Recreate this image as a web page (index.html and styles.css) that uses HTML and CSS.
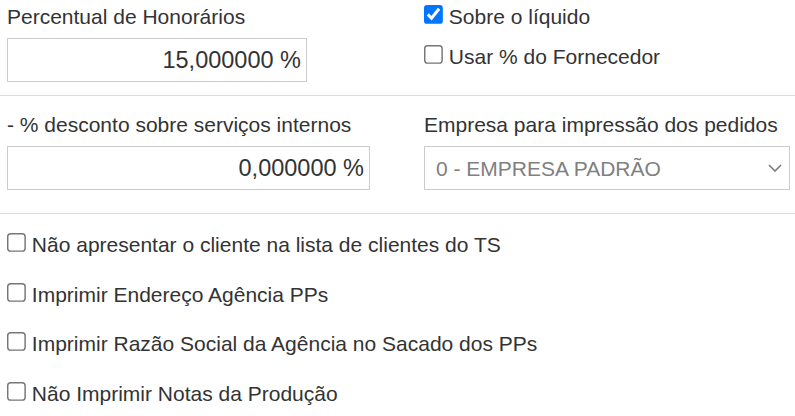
FILE: index.html
```html
<!DOCTYPE html>
<html lang="pt-BR">
<head>
  <meta charset="UTF-8">
  <meta name="viewport" content="width=device-width, initial-scale=1.0">
  <title>Honorários</title>
  <link rel="stylesheet" href="styles.css">
</head>
<body>
  <div class="form">
    <!-- Honorarios -->
    <div class="row row--first">
      <div class="field">
        <label class="field__label" for="honorarios">Percentual de Honorários</label>
        <input class="field__input field__input--short" id="honorarios" type="text" value="15,000000 %">
      </div>
      <div class="checks">
        <label class="check"><input type="checkbox" checked><span>Sobre o líquido</span></label>
        <label class="check"><input type="checkbox"><span>Usar % do Fornecedor</span></label>
      </div>
    </div>

    <hr class="divider divider--first">

    <!-- Desconto / empresa -->
    <div class="row row--second">
      <div class="field">
        <label class="field__label" for="desconto">- % desconto sobre serviços internos</label>
        <input class="field__input field__input--long" id="desconto" type="text" value="0,000000 %">
      </div>
      <div class="field">
        <label class="field__label" for="empresa">Empresa para impressão dos pedidos</label>
        <div class="select">
          <select class="select__control" id="empresa">
            <option>0 - EMPRESA PADRÃO</option>
          </select>
          <svg class="select__arrow" width="14" height="8" viewBox="0 0 14 8">
            <path d="M1 1l6 6 6-6" fill="none" stroke="#7a7a7a" stroke-width="1.6"/>
          </svg>
        </div>
      </div>
    </div>

    <hr class="divider divider--second">

    <!-- Opcoes -->
    <div class="options">
      <label class="check"><input type="checkbox"><span>Não apresentar o cliente na lista de clientes do TS</span></label>
      <label class="check"><input type="checkbox"><span>Imprimir Endereço Agência PPs</span></label>
      <label class="check"><input type="checkbox"><span>Imprimir Razão Social da Agência no Sacado dos PPs</span></label>
      <label class="check"><input type="checkbox"><span>Não Imprimir Notas da Produção</span></label>
    </div>
  </div>
</body>
</html>
```

FILE: styles.css
```css
* {
  margin: 0;
  padding: 0;
  box-sizing: border-box;
}

body {
  font-family: "Liberation Sans", Arial, sans-serif;
  font-size: 21px;
  color: #333;
  background-color: #fff;
}

.row {
  display: grid;
  grid-template-columns: 417px 1fr;
  padding: 0 4px 0 7px;
}

.row--first {
  padding-top: 5px;
}

.row--second {
  padding-top: 17px;
}

.field__label {
  display: block;
  line-height: 24px;
  margin-bottom: 9px;
}

.field__input {
  display: block;
  height: 44px;
  padding: 0 5px 0 10px;
  border: 1px solid #ccc;
  font-family: inherit;
  font-size: 23.5px;
  color: #333;
  text-align: right;
  outline: none;
}

.field__input--short {
  width: 300px;
}

.field__input--long {
  width: 363px;
}

/* Select */
.select {
  position: relative;
  width: 366px;
}

.select__control {
  display: block;
  width: 100%;
  height: 44px;
  padding: 0 30px 0 11px;
  border: 1px solid #ccc;
  border-radius: 0;
  background-color: #fff;
  font-family: inherit;
  font-size: 21px;
  color: #808080;
  appearance: none;
  -webkit-appearance: none;
  outline: none;
}

.select__arrow {
  position: absolute;
  top: 18px;
  right: 8px;
  pointer-events: none;
}

/* Checkboxes */
.checks {
  display: flex;
  flex-direction: column;
  gap: 16px;
}

.check {
  display: flex;
  align-items: flex-start;
  gap: 6px;
  line-height: 24px;
}

.check input {
  flex-shrink: 0;
  width: 13px;
  height: 13px;
  margin: 0;
  zoom: 1.45;
}

.divider {
  border: 0;
  border-top: 1px solid #ddd;
}

.divider--first {
  margin-top: 13px;
}

.divider--second {
  margin-top: 23px;
}

.options {
  display: flex;
  flex-direction: column;
  gap: 25.7px;
  padding: 19px 7px 0;
}
```
